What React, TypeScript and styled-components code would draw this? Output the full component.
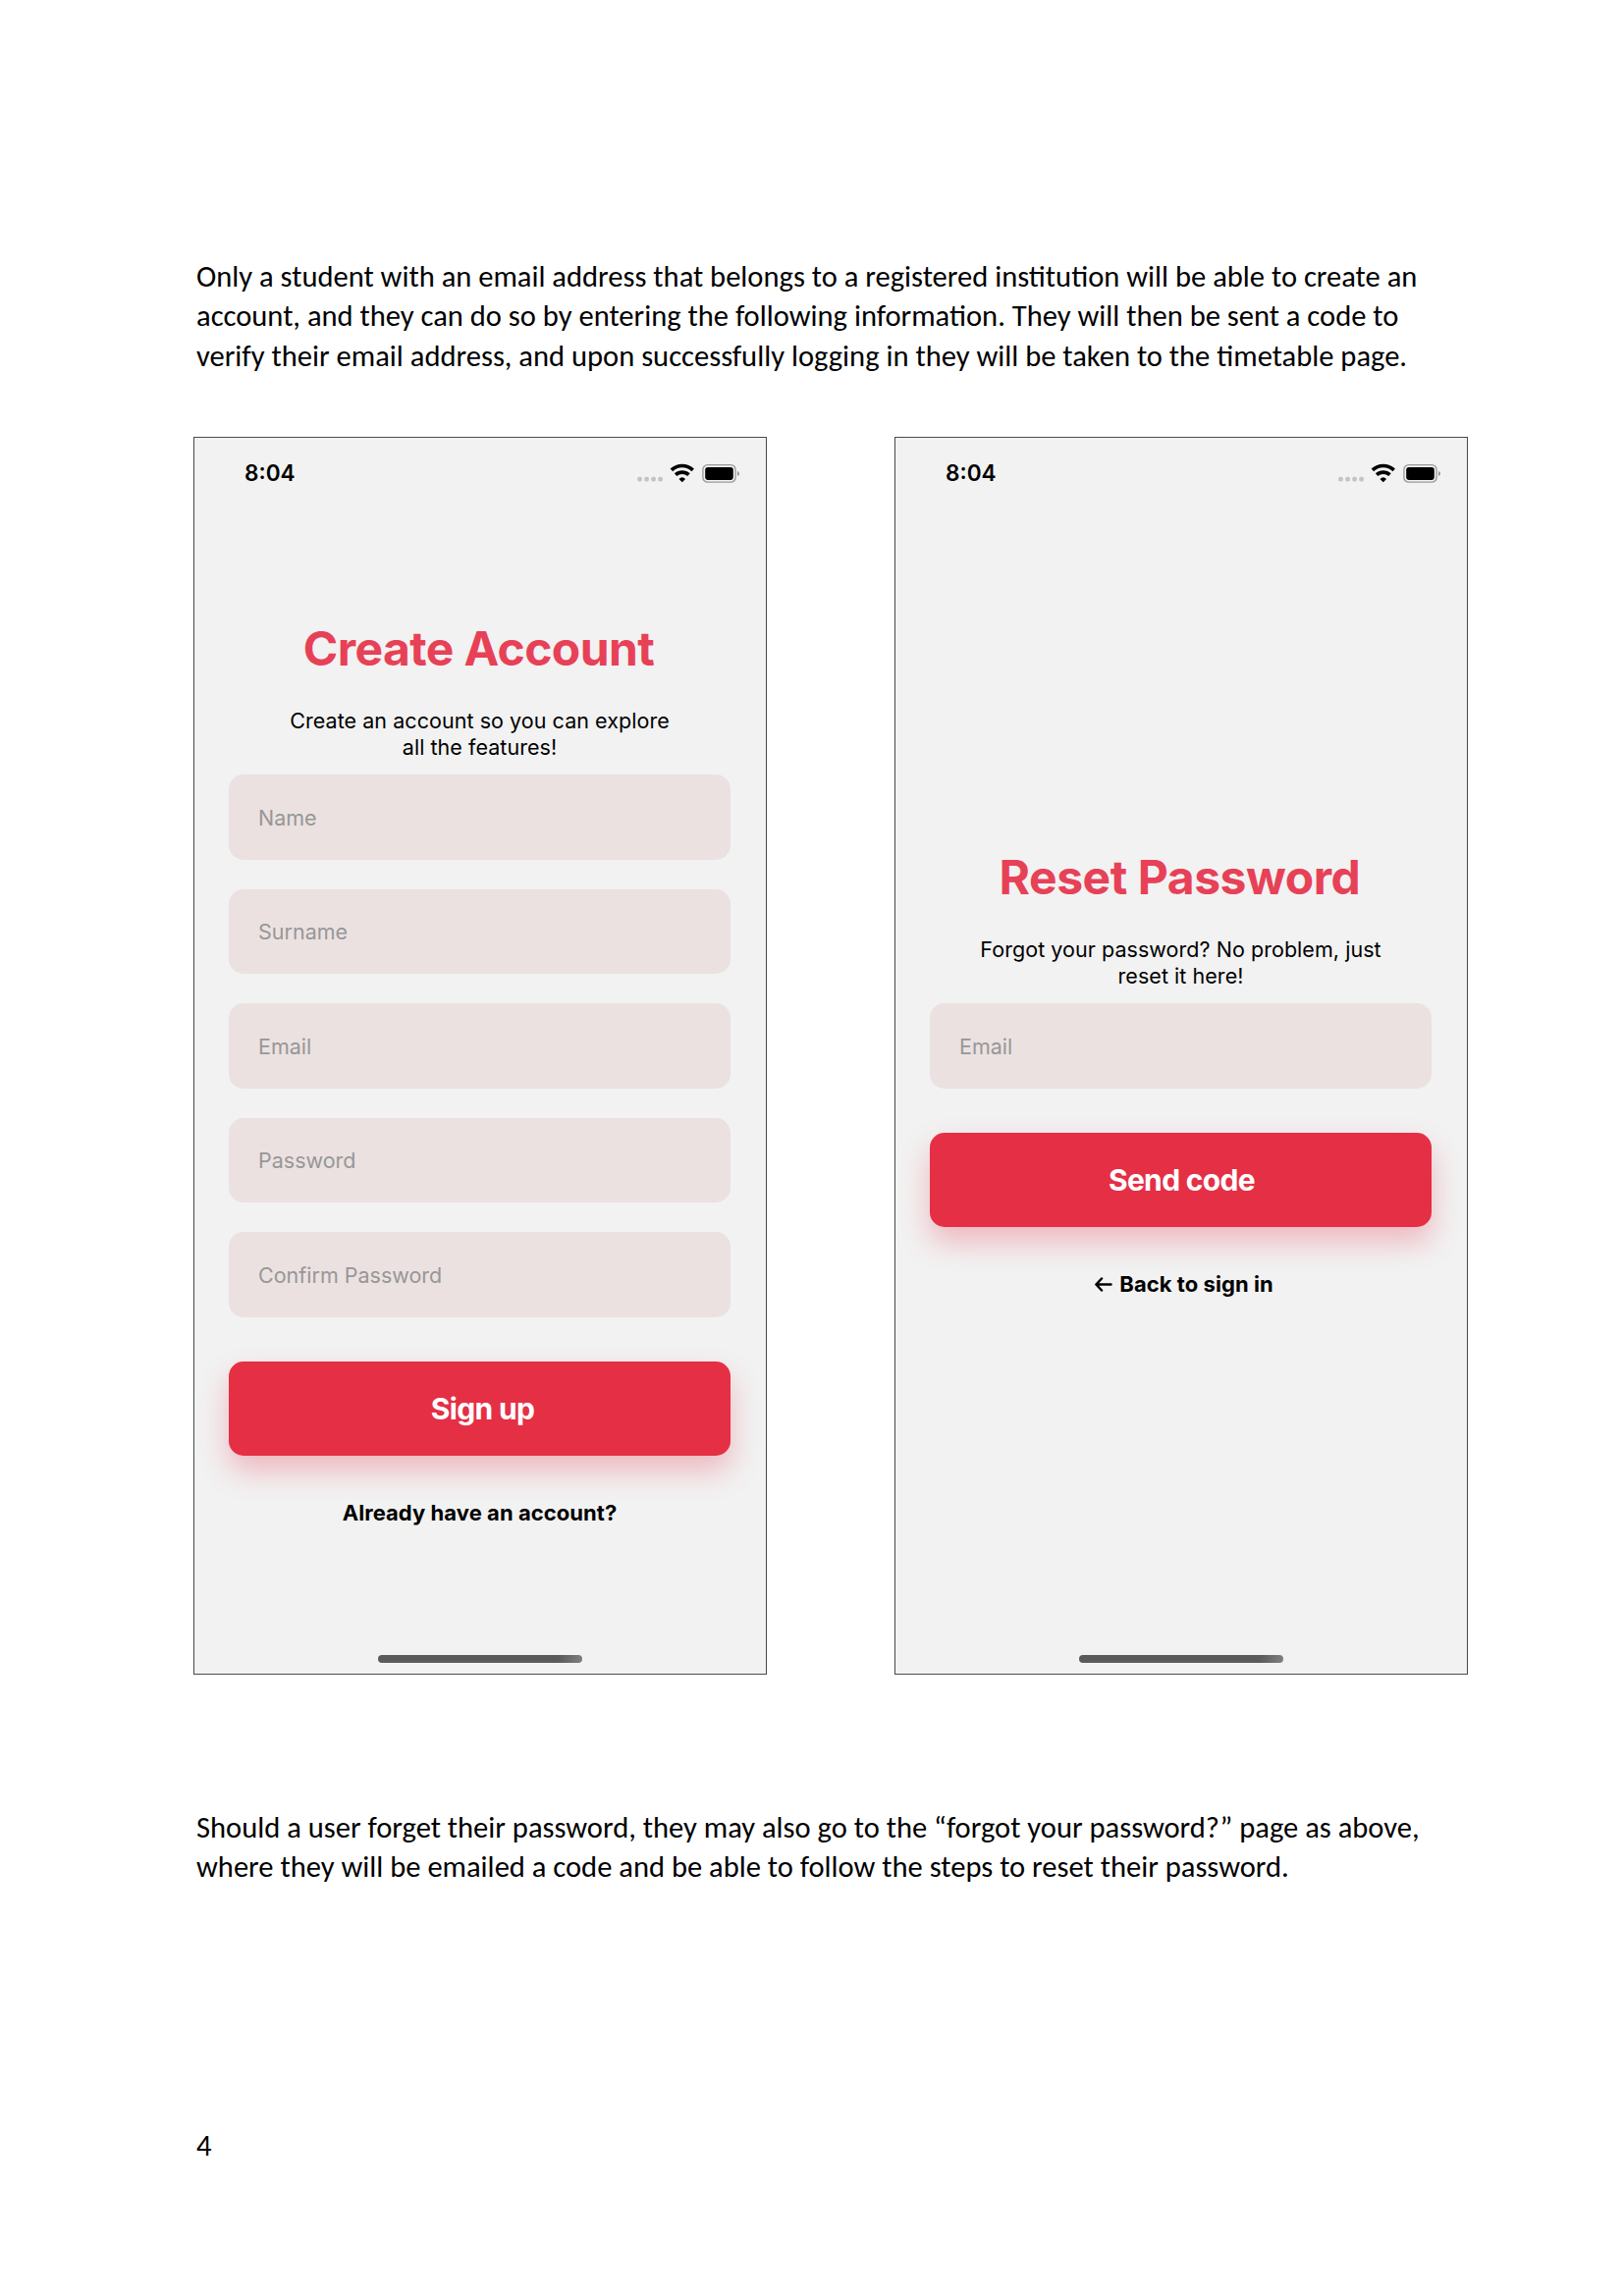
import React from "react";
import styled, { createGlobalStyle } from "styled-components";

const GlobalStyle = createGlobalStyle`
  *, *::before, *::after { box-sizing: border-box; }
  body { margin: 0; background: #fff; }
  p, h2 { margin: 0; font-weight: 400; }
`;

const Page = styled.main`
  display: flex;
  flex-direction: column;
  width: 1654px;
  height: 2339px;
  padding: 262px 159px 0 197px;
  background: #fff;
  color: #000;
`;

const Paragraph = styled.p`
  padding-left: 3px;
  font-family: Carlito, Calibri, Lato, sans-serif;
  font-size: 30.56px;
  line-height: 40.3px;
  white-space: nowrap;
`;

const Line = styled.span`
  display: block;
`;

const PageNumber = styled(Paragraph).attrs({ as: "footer" })`
  margin-top: auto;
  padding-bottom: 133px;
`;

const Screens = styled.section`
  display: flex;
  justify-content: space-between;
  margin: 62px 0 136px;
`;

const Phone = styled.article`
  display: flex;
  flex-direction: column;
  width: 584px;
  height: 1261px;
  border: 1px solid #4a4a4c;
  background: #f2f2f2;
  font-family: Inter, "Liberation Sans", sans-serif;
`;

const StatusBar = styled.header`
  display: flex;
  justify-content: space-between;
  align-items: center;
  height: 72px;
  padding: 0 25px 0 51px;
  font-size: 22.6px;
  font-weight: 600;
`;

const StatusIcons = styled.svg`
  display: block;
`;

const Content = styled.div<{ $top: number }>`
  display: flex;
  flex: 1;
  flex-direction: column;
  align-items: center;
  padding: ${({ $top }) => $top}px 36px 0 35px;
`;

const Title = styled.h2<{ $tracking: number }>`
  margin-right: 2px;
  color: #e74157;
  font-size: 48px;
  font-weight: 700;
  line-height: 58px;
  letter-spacing: ${({ $tracking }) => $tracking}px;
`;

const Subtitle = styled.p`
  margin: 31px 0 15px;
  font-size: 21.5px;
  line-height: 26.8px;
  letter-spacing: 0.05px;
  text-align: center;
`;

const Fields = styled.div`
  display: flex;
  flex-direction: column;
  gap: 30px;
  width: 100%;
`;

const Field = styled.div`
  display: flex;
  align-items: center;
  height: 86.5px;
  padding-left: 30px;
  border-radius: 15px;
  background: #ebe1e1;
  color: #979797;
  font-size: 21.5px;
`;

const PrimaryButton = styled.button<{ $indent: number }>`
  width: 100%;
  height: 96px;
  margin-top: 45px;
  padding: 0 0 0 ${({ $indent }) => $indent}px;
  border: 0;
  border-radius: 15px;
  background: #e52f45;
  box-shadow: 0 15px 30px rgba(229, 47, 69, 0.3);
  color: #fff;
  font: 700 30px Inter, "Liberation Sans", sans-serif;
  letter-spacing: -0.65px;
`;

const FooterLink = styled.a<{ $indent: number }>`
  display: flex;
  align-items: center;
  gap: 7px;
  margin-top: 45px;
  padding-left: ${({ $indent }) => $indent}px;
  font-size: 22px;
  font-weight: 700;
  line-height: 27px;
  letter-spacing: 0.06px;
`;

const HomeIndicator = styled.div`
  align-self: center;
  width: 208px;
  height: 8px;
  margin-bottom: 11px;
  border-radius: 4px;
  background: linear-gradient(100deg, #5a5a5a 88%, #808080);
`;

const ConnectionStatus = () => (
  <StatusIcons width="106" height="24" viewBox="0 0 106 24">
    <g fill="#c4c4c4">
      {[0.2, 7.3, 14.3, 21.3].map((x) => (
        <rect key={x} x={x} y="15.8" width="4.6" height="4.6" rx="1.6" />
      ))}
    </g>
    <g fill="none" stroke="#000" strokeWidth="3.7">
      <path d="M34.9 8.8a16 16 0 0 1 21.8 0" />
      <path d="M39.1 13.7a9.8 9.8 0 0 1 13.4 0" />
    </g>
    <path d="M45.8 21.3l-3.3-3.4a4.8 4.8 0 0 1 6.6 0z" fill="#000" />
    <rect x="66.9" y="3.6" width="33.2" height="17.6" rx="4.8" fill="none" stroke="#969696" strokeWidth="1.3" />
    <rect x="69.2" y="5.9" width="28.6" height="13" rx="2.8" fill="#000" />
    <path d="M102 9.9c2.7.8 2.7 4.2 0 5z" fill="#969696" />
  </StatusIcons>
);

const BackArrow = () => (
  <svg width="18" height="15" viewBox="0 0 18 15" fill="none" stroke="#000" strokeWidth="2.5" strokeLinecap="round" strokeLinejoin="round">
    <path d="M16.5 7.5H1.5M7 1.5l-5.6 6L7 13.5" />
  </svg>
);

type ScreenProps = {
  top: number;
  title: string;
  tracking: number;
  subtitle: [string, string];
  fields: string[];
  action: string;
  link: string;
  back?: boolean;
};

const Screen = ({ top, title, tracking, subtitle, fields, action, link, back }: ScreenProps) => (
  <Phone>
    <StatusBar>
      <span>8:04</span>
      <ConnectionStatus />
    </StatusBar>
    <Content $top={top}>
      <Title $tracking={tracking}>{title}</Title>
      <Subtitle>
        {subtitle[0]}
        <br />
        {subtitle[1]}
      </Subtitle>
      <Fields>
        {fields.map((name) => (
          <Field key={name}>{name}</Field>
        ))}
      </Fields>
      <PrimaryButton $indent={back ? 2 : 6}>{action}</PrimaryButton>
      <FooterLink $indent={back ? 7 : 0}>
        {back && <BackArrow />}
        {link}
      </FooterLink>
    </Content>
    <HomeIndicator />
  </Phone>
);

export default function App() {
  return (
    <>
      <GlobalStyle />
      <Page>
        <Paragraph>
          <Line>Only a student with an email address that belongs to a registered institution will be able to create an</Line>
          <Line>account, and they can do so by entering the following information. They will then be sent a code to</Line>
          <Line>verify their email address, and upon successfully logging in they will be taken to the timetable page.</Line>
        </Paragraph>
        <Screens>
          <Screen
            top={114}
            title="Create Account"
            tracking={-0.6}
            subtitle={["Create an account so you can explore", "all the features!"]}
            fields={["Name", "Surname", "Email", "Password", "Confirm Password"]}
            action="Sign up"
            link="Already have an account?"
          />
          <Screen
            top={347}
            title="Reset Password"
            tracking={-0.46}
            subtitle={["Forgot your password? No problem, just", "reset it here!"]}
            fields={["Email"]}
            action="Send code"
            link="Back to sign in"
            back
          />
        </Screens>
        <Paragraph>
          <Line>Should a user forget their password, they may also go to the “forgot your password?” page as above,</Line>
          <Line>where they will be emailed a code and be able to follow the steps to reset their password.</Line>
        </Paragraph>
        <PageNumber>4</PageNumber>
      </Page>
    </>
  );
}
